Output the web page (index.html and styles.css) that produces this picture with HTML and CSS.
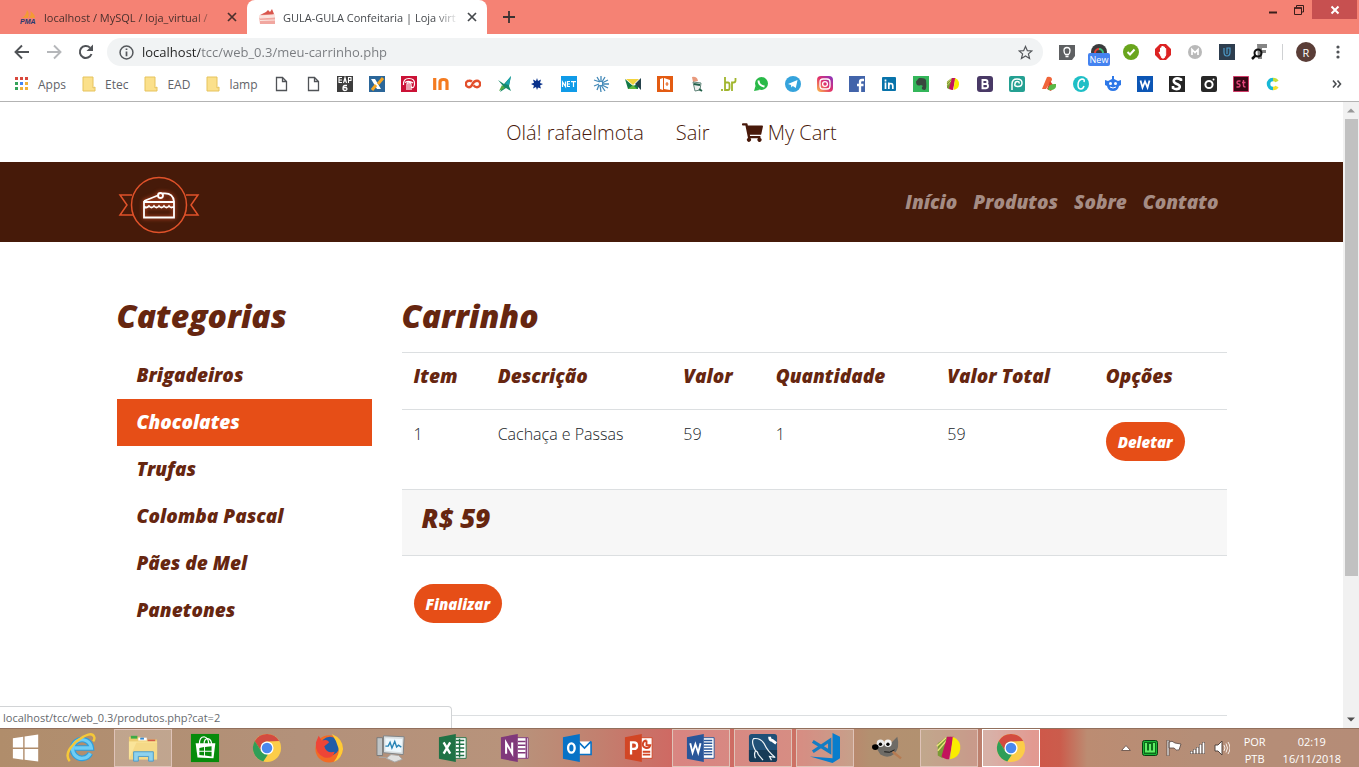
FILE: index.html
```html
<!DOCTYPE html>
<html lang="pt-BR">
<head>
<meta charset="utf-8">
<meta name="viewport" content="width=device-width, initial-scale=1">
<title>GULA-GULA Confeitaria | Loja virtual</title>
<link rel="stylesheet" href="styles.css">
</head>
<body>
<svg class="defs" aria-hidden="true">
  <symbol id="x" viewBox="0 0 10 10"><path d="M1 1l8 8M9 1L1 9" stroke="currentColor" stroke-width="1.7"/></symbol>
  <symbol id="folder" viewBox="0 0 16 16"><path d="M2 1h10v11l2-1v4H2z" fill="#fbe08b"/><path d="M2 1h10v11l2-1v4H2z" fill="none" stroke="#e6c35c"/></symbol>
  <symbol id="page" viewBox="0 0 16 16"><path d="M3.500 1.500h6l4 4v9h-10zM9.500 1.500v4h4" fill="#fff" stroke="#505357" stroke-width="1.300"/></symbol>
  <symbol id="chrome" viewBox="0 0 32 32"><circle cx="16" cy="16" r="15" fill="#fccd48"/><path d="M3 8.500l6.800 11.300L16 23l1 0-5 7.500A15 15 0 0 1 3 8.500z" fill="#2f9e58"/><path d="M3 8.500L10 20l6-4-1-6.500z" fill="#2f9e58"/><path d="M3 8.500A15 15 0 0 1 29 8.500L16 9a7 7 0 0 0-6 4l-.5 5z" fill="#d34b40"/><circle cx="16" cy="16" r="7" fill="#fff"/><circle cx="16" cy="16" r="5.600" fill="#4a88ee"/></symbol>
  <symbol id="ball" viewBox="0 0 32 32"><path d="M4 24L4 11 12 5 18 4 9 27z" fill="#7a9a35"/><path d="M3 14L13 5M4 19L16 5" stroke="#e8e37a" stroke-width="1.500"/><path d="M14 4h7l-5 24q-5 0-8-3z" fill="#c3145c"/><path d="M20 4q9 4 8 13t-11 11z" fill="#faed00"/></symbol>
  <symbol id="officedoc" viewBox="0 0 32 32"><path d="M16 5h14v22H16z" fill="#fff" stroke="currentColor"/><path d="M1 4.500L19 1v30L1 27.500z" fill="currentColor"/></symbol>
</svg>

<header class="browser">
  <div class="tabstrip">
    <div class="tab">
      <svg class="i16" viewBox="0 0 16 16"><path d="M2 9q4-2 5-8 3 3 1 8zM9 9q3-4 1-7 5 3 5 7z" fill="#f39a35"/><text x="0" y="15" class="pma">PMA</text></svg>
      <span class="tab-title">localhost / MySQL / loja_virtual /</span>
      <button class="tab-close" aria-label="Fechar guia"><svg viewBox="0 0 10 10"><use href="#x"/></svg></button>
    </div>
    <div class="tab active">
      <svg class="i16" viewBox="0 0 16 16"><path d="M0 7L10 3l6 3v9H1z" fill="#f1a7a0"/><path d="M0 7l16-1v2L1 9zM1 11.500l15-.5" stroke="#fbe5df" fill="#fbe5df"/><path d="M1 6L7 3l2-2 2 2 2-3 2 5z" fill="#d9564d"/></svg>
      <span class="tab-title">GULA-GULA Confeitaria | Loja virt</span>
      <button class="tab-close" aria-label="Fechar guia"><svg viewBox="0 0 10 10"><use href="#x"/></svg></button>
    </div>
    <button class="new-tab" aria-label="Nova guia"><svg viewBox="0 0 12 12"><path d="M6 0v12M0 6h12" stroke="#3b3232" stroke-width="1.800"/></svg></button>
    <div class="window-buttons">
      <button aria-label="Minimizar"><svg viewBox="0 0 12 12"><path d="M2 8.500h8" stroke="#3a1e1b" stroke-width="2"/></svg></button>
      <button aria-label="Restaurar"><svg viewBox="0 0 12 12"><path d="M1.500 4h7v6.500h-7zM3.500 3.500v-2h7v6.500h-2" fill="none" stroke="#3a1e1b"/><path d="M1 4h8" stroke="#3a1e1b" stroke-width="1.500"/></svg></button>
      <button class="win-close" aria-label="Fechar"><svg viewBox="0 0 12 12"><path d="M2.500 2.500l7 7M9.500 2.500l-7 7" stroke="#fff" stroke-width="2"/></svg></button>
    </div>
  </div>

  <div class="toolbar">
    <button aria-label="Voltar"><svg viewBox="0 0 16 16"><path d="M15 8H2M8 1.500L1.500 8 8 14.500" fill="none" stroke="#505357" stroke-width="1.900"/></svg></button>
    <button aria-label="Avançar"><svg viewBox="0 0 16 16"><path d="M1 8h13M8 1.500L14.500 8 8 14.500" fill="none" stroke="#b5b7ba" stroke-width="1.900"/></svg></button>
    <button aria-label="Recarregar"><svg viewBox="0 0 16 16"><path d="M13.500 10A6 6 0 1 1 12 3.600" fill="none" stroke="#505357" stroke-width="2"/><path d="M15 .5V7H8.500z" fill="#505357"/></svg></button>
    <div class="omnibox">
      <svg class="i14" viewBox="0 0 14 14"><circle cx="7" cy="7" r="6" fill="none" stroke="#55585c" stroke-width="1.400"/><path d="M7 6v4.500M7 3.200v1.500" stroke="#55585c" stroke-width="1.600"/></svg>
      <input class="url" type="text" aria-label="Endereço" value="localhost/tcc/web_0.3/meu-carrinho.php">
      <button aria-label="Favoritar"><svg viewBox="0 0 16 16"><path d="M8 1.500l2 4.500 4.800.4-3.700 3.100 1.200 4.800L8 11.700l-4.300 2.600 1.200-4.800L1.200 6.400 6 6z" fill="none" stroke="#55585c" stroke-width="1.300"/></svg></button>
    </div>
    <div class="extensions">
      <button aria-label="Dicas"><svg viewBox="0 0 16 16"><path d="M0 1h16v11l-3 4H0z" fill="#5e6062"/><path d="M6.500 10.500Q5 9 5 6.500a3 3 0 0 1 6 0Q11 9 9.500 10.500zM6.500 12.500h3" fill="none" stroke="#fff" stroke-width="1.300"/></svg></button>
      <button class="ext-new" aria-label="New"><svg viewBox="0 0 16 16"><circle cx="8" cy="8" r="8" fill="#3a3b3c"/><path d="M4 9a4 4 0 0 1 4-4" stroke="#e23e35" stroke-width="2" fill="none"/><path d="M8 5a4 4 0 0 1 4 4" stroke="#3cc37b" stroke-width="2" fill="none"/></svg><span class="badge">New</span></button>
      <button aria-label="Verificado"><svg viewBox="0 0 16 16"><circle cx="8" cy="8" r="8" fill="#69a51d"/><path d="M4.500 8l2.500 2.500 4.500-5" stroke="#fff" stroke-width="2" fill="none"/></svg></button>
      <button aria-label="Bloqueador"><svg viewBox="0 0 16 16"><path d="M5 0h6l5 5v6l-5 5H5l-5-5V5z" fill="#dc2323"/><path d="M4 8l1.500 1V4h1.300v4V2.500h1.300V8 3h1.300v5V4.500h1.300V11L9 14H7z" fill="#fff" stroke="#fff"/></svg></button>
      <button aria-label="M"><svg viewBox="0 0 16 16"><circle cx="8" cy="8" r="7" fill="#b9b9b9"/><path d="M5 11V5.500l3 3 3-3V11" fill="none" stroke="#fff" stroke-width="1.700"/></svg></button>
      <button aria-label="U"><svg viewBox="0 0 16 16"><path d="M0 0h16v16H0z" fill="#2d3d4e"/><path d="M5 4v4q0 4 3 4t3-4V4H8v6" fill="none" stroke="#4d9bc9" stroke-width="1.200"/></svg></button>
      <button aria-label="Fontes"><svg viewBox="0 0 16 16"><path d="M6 0h10v4h-5v2h4v3h-4v6H7z" fill="#858585"/><circle cx="7" cy="9" r="3.500" fill="none" stroke="#111" stroke-width="2"/><path d="M4.500 11.500L1 15" stroke="#111" stroke-width="2.500"/></svg></button>
    </div>
    <button class="avatar" aria-label="Perfil">R</button>
    <button class="menu" aria-label="Menu"><svg viewBox="0 0 16 16"><circle cx="8" cy="3" r="1.600"/><circle cx="8" cy="8" r="1.600"/><circle cx="8" cy="13" r="1.600"/></svg></button>
  </div>

  <nav class="bookmarks" aria-label="Favoritos">
    <a class="bm-text" href="#"><svg class="i16" viewBox="0 0 16 16"><path d="M1 2.500h3M6 2.500h3M11 2.500h3" stroke="#d9483c" stroke-width="3"/><path d="M1 7.500h3M1 12.500h3" stroke="#35a35a" stroke-width="3"/><path d="M6 7.500h3" stroke="#4285f4" stroke-width="3"/><path d="M11 7.500h3M6 12.500h3M11 12.500h3" stroke="#f0b13a" stroke-width="3"/></svg>Apps</a>
    <a class="bm-text" href="#"><svg class="i16"><use href="#folder"/></svg>Etec</a>
    <a class="bm-text" href="#"><svg class="i16"><use href="#folder"/></svg>EAD</a>
    <a class="bm-text" href="#"><svg class="i16"><use href="#folder"/></svg>lamp</a>
    <div class="bm-icons">
      <a href="#" aria-label="Página 1"><svg><use href="#page"/></svg></a>
      <a href="#" aria-label="Página 2"><svg><use href="#page"/></svg></a>
      <a href="#" aria-label="EAP 6"><svg viewBox="0 0 16 16"><path d="M0 0h16v16H0z" fill="#3d3d3d"/><path d="M5 1.500H2v5h3M2 4h3M6.500 7l1.500-5.500L9.500 7M7 5h2M11.500 7V1.500h2.500V4.500h-2.500" fill="none" stroke="#fff" stroke-width="1.100"/><path d="M10 9.500H8q-2 0-2 3 0 2 2 2t2-1.500-2-1.500-2 1" fill="none" stroke="#fff" stroke-width="1.300"/></svg></a>
      <a href="#" aria-label="X"><svg viewBox="0 0 16 16"><path d="M0 0h16v16H0z" fill="#2b6699"/><path d="M2 3h4l6 10h-4z" fill="#fff"/><path d="M14 2L9 8M7 9l-4 5" stroke="#f5a623" stroke-width="3"/></svg></a>
      <a href="#" aria-label="Bradesco"><svg viewBox="0 0 16 16"><path d="M0 0h16v16H0z" fill="#cb1236"/><path d="M2.500 9Q2 2.500 8 2.500T13.500 8 10 10.500M4 6.500Q8 4 12 7M6 14V8.500q0-2 2-2t2 2V14M8 7v7" stroke="#fff" stroke-width="1.200" fill="none"/></svg></a>
      <a href="#" aria-label="IN"><svg viewBox="0 0 16 16"><path d="M1.700 2v12M7 14V6q0-2.500 3.500-2.500T14 6v8" stroke="#f47b20" stroke-width="3.200" fill="none"/></svg></a>
      <a href="#" aria-label="CO"><svg viewBox="0 0 16 16"><path d="M7 5.500Q5.500 4.500 4 4.800a3.200 3.200 0 0 0 0 6.400Q6 11.200 7.500 8T12 4.800a3.200 3.200 0 0 1 0 6.400q-2 0-3.500-2" fill="none" stroke="#e24f2c" stroke-width="2.400"/></svg></a>
      <a href="#" aria-label="Pássaro"><svg viewBox="0 0 16 16"><path d="M1 4l6 4 7-8-2 10 2 5-5-3-6 4 3-6z" fill="#17896b"/><path d="M8 8l6-8-2 9z" fill="#1aa5b0"/><path d="M2 15l3-6 3 3z" fill="#53ac42"/></svg></a>
      <a href="#" aria-label="Estrela"><svg viewBox="0 0 16 16"><path d="M8 2l1 3 3-1.500-1 3.500 3 1-3 1.500 1 3-3-1L8 14l-1-3-3 1.500L5 9.500 2 8l3-1.200L4 3.500 7 5z" fill="#08318b"/></svg></a>
      <a href="#" aria-label="NET"><svg viewBox="0 0 16 16"><path d="M0 0h16v16H0z" fill="#109be8"/><path d="M1.500 11V6l3 4.500v-5M9 5.500H6.500v5H9M6.500 8H9M10 5.700h5M12.500 5.700V11" fill="none" stroke="#fff" stroke-width="1.200"/></svg></a>
      <a href="#" aria-label="Leque"><svg viewBox="0 0 16 16"><path d="M7 6L1 4M7 6L4 1M8 6V0M9 6l3-5M9 7l6-3M9 8h7M9 9l6 3M8 9l4 6M7 9l1 7M6 9l-2 5M6 8l-5 2" stroke="#4389b8" stroke-width="1.300"/></svg></a>
      <a href="#" aria-label="Carta"><svg viewBox="0 0 16 16"><path d="M0 3l3 10h10V8l-5 2z" fill="#127846"/><path d="M1 3h13L8 9z" fill="#f2d33d"/><path d="M10 8l6-6v12z" fill="#26424c"/><path d="M3 13l5-4 4 4z" fill="#60b83b"/></svg></a>
      <a href="#" aria-label="Livro"><svg viewBox="0 0 16 16"><path d="M0 0h16v16H0z" fill="#e35b12"/><path d="M3 3l3-1v12l-3-1zM7 2l6 2v10l-6-1z" fill="#fff"/><path d="M10 6v4M8.500 8h3" stroke="#e35b12"/></svg></a>
      <a href="#" aria-label="Mascote"><svg viewBox="0 0 16 16"><path d="M3 1q5-1 6 4l-5 1z" fill="#e8997c"/><path d="M4 6l8 1-1 7-5 1z" fill="#eee" stroke="#618579"/><path d="M5 8l6 1M10 13l3 2" stroke="#22604a" stroke-width="2"/></svg></a>
      <a href="#" aria-label="br"><svg viewBox="0 0 16 16"><path d="M4 1v13h3q1.500 0 1.500-2V8.500q0-2-1.500-2H4M11 15V6.500h1.500q2 0 2-2V2M1 13v2" stroke="#a0b52c" stroke-width="1.800" fill="none"/></svg></a>
      <a href="#" aria-label="WhatsApp"><svg viewBox="0 0 16 16"><circle cx="8.500" cy="7.500" r="6.500" fill="#28b947"/><path d="M1 15l1.500-5 4 4z" fill="#28b947"/><path d="M5.500 4.500q0 5 6 6" stroke="#fff" stroke-width="2" fill="none"/></svg></a>
      <a href="#" aria-label="Telegram"><svg viewBox="0 0 16 16"><circle cx="8" cy="8" r="8" fill="#35a3dc"/><path d="M3 8l9.500-4-1.700 8-3-2-1.500 1.500L6 9z" fill="#fff"/></svg></a>
      <a href="#" aria-label="Instagram"><svg viewBox="0 0 16 16"><defs><linearGradient id="ig" x1="0" y1="1" x2="1" y2="0"><stop offset="0" stop-color="#fdc34c"/><stop offset=".5" stop-color="#e1306c"/><stop offset="1" stop-color="#8133c5"/></linearGradient></defs><rect width="16" height="16" rx="4" fill="url(#ig)"/><rect x="3" y="3" width="10" height="10" rx="3" fill="none" stroke="#fff" stroke-width="1.300"/><circle cx="8" cy="8" r="2.400" fill="none" stroke="#fff" stroke-width="1.300"/></svg></a>
      <a href="#" aria-label="Facebook"><svg viewBox="0 0 16 16"><path d="M0 0h16v16H0z" fill="#4264aa"/><path d="M11 16V6q0-2 2-2h2M8 9h6.500" stroke="#fff" stroke-width="2.300" fill="none"/></svg></a>
      <a href="#" aria-label="LinkedIn"><svg viewBox="0 0 16 16"><rect x="1" y="1" width="14" height="14" rx="1" fill="#0873aa"/><path d="M4.500 6.500V13M4.500 3.500v2M7.800 13V6.500M7.800 10q0-2.500 2-2.500T11.800 10v3" stroke="#fff" stroke-width="1.700" fill="none"/></svg></a>
      <a href="#" aria-label="Evernote"><svg viewBox="0 0 16 16"><path d="M0 0h16v16H0z" fill="#34b65a"/><path d="M3 5.500L6 2q6-.5 7 2 1 9-1 10-4 0-3-3l1-1-2-1q-5 2-5-3.500z" fill="#39473e"/></svg></a>
      <a href="#" aria-label="Bola"><svg><use href="#ball"/></svg></a>
      <a href="#" aria-label="Bootstrap"><svg viewBox="0 0 16 16"><rect width="16" height="16" rx="3" fill="#493966"/><path d="M5.500 4h3q2 0 2 2t-2 2h-3 3.500q2 0 2 2t-2 2.200H5.500z" fill="none" stroke="#fff" stroke-width="1.900"/></svg></a>
      <a href="#" aria-label="P"><svg viewBox="0 0 16 16"><rect width="16" height="16" rx="2" fill="#24a092"/><path d="M3 14V8q0-5 5-5t5 4q0 3.500-4 3.500T6 8q0-2.500 2.300-2.500T10 7.500" stroke="#fff" stroke-width="1.500" fill="none"/></svg></a>
      <a href="#" aria-label="Folhas"><svg viewBox="0 0 16 16"><path d="M1 13L6 1q5-1 5 3L5 13z" fill="#f0653a"/><path d="M6 13L9 5l4 5-3 5z" fill="#db3e24"/><path d="M7 14q0-7 8-6 1 7-8 6z" fill="#59b947"/></svg></a>
      <a href="#" aria-label="Canva"><svg viewBox="0 0 16 16"><circle cx="8" cy="8" r="8" fill="#1ebfc6"/><path d="M11 6q1-3-2-3-4 1-4 6 0 4 3 4 2 0 3-3" stroke="#fff" stroke-width="1.500" fill="none"/></svg></a>
      <a href="#" aria-label="Robô"><svg viewBox="0 0 16 16"><path d="M7 0h2v3l4 2 3-1v5l-2 1q-1 5-6 5t-6-5L0 9V4l3 1 4-2z" fill="#2d78e8"/><path d="M5 11q3 2 6 0" stroke="#fff" fill="none"/><circle cx="5.500" cy="7.500" r="1.500" fill="#fff"/><circle cx="10.500" cy="7.500" r="1.500" fill="#fff"/></svg></a>
      <a href="#" aria-label="W"><svg viewBox="0 0 16 16"><path d="M0 0h16v16H0z" fill="#0c56b5"/><path d="M3.500 4.500l2 7L8 5.500l2.500 6 2-7" stroke="#fff" stroke-width="1.800" fill="none"/></svg></a>
      <a href="#" aria-label="S"><svg viewBox="0 0 16 16"><path d="M0 0h16v16H0z" fill="#252525"/><path d="M12 5V3.500Q9 2 7 2.500 4 3.500 5 6q1 1.500 4 2.500 3 1.500 1 4-3 1.500-6-.5V10" stroke="#fff" stroke-width="2.600" fill="none"/></svg></a>
      <a href="#" aria-label="Câmera"><svg viewBox="0 0 16 16"><rect width="16" height="16" rx="2" fill="#272727"/><circle cx="8" cy="8.500" r="3.600" fill="none" stroke="#fff" stroke-width="2"/><circle cx="12.500" cy="3.500" r="1" fill="#fff"/></svg></a>
      <a href="#" aria-label="Stock"><svg viewBox="0 0 16 16"><path d="M.5.500h15v15H.5z" fill="#3a0715" stroke="#d03b68"/><path d="M7.500 5H5.500q-1.500 0-1.500 1.500T5.500 8 7 9.500 5.500 11H3.500M10.500 4v5.500q0 1.500 2 1.500M9 6.500h3.500" stroke="#e2467a" stroke-width="1.400" fill="none"/></svg></a>
      <a href="#" aria-label="C"><svg viewBox="0 0 16 16"><path d="M8 3.500A4.500 4.500 0 0 0 8 12.500" fill="none" stroke="#17b8d6" stroke-width="3.500"/><path d="M8 3.500q3 0 4 2" fill="none" stroke="#c4dd3c" stroke-width="3.500"/><path d="M8 12.500q3 0 4-2" fill="none" stroke="#f3e12f" stroke-width="3.500"/></svg></a>
    </div>
    <button class="more" aria-label="Mais favoritos"><svg viewBox="0 0 10 10"><path d="M1 1.500L4 5 1 8.500M5.500 1.500L8.500 5l-3 3.500" fill="none" stroke="#4b4e52" stroke-width="1.600"/></svg></button>
  </nav>
</header>

<div class="viewport">
  <div class="site">
    <nav class="account" aria-label="Conta">
      <a href="#">Olá! rafaelmota</a>
      <a href="#">Sair</a>
      <a href="#"><svg class="cart" viewBox="0 0 576 512"><path fill="currentColor" d="M528 301l47-208c4-15-8-29-23-29H160l-9-45C149 8 139 0 128 0H24C11 0 0 11 0 24v16c0 13 11 24 24 24h70l70 343a56 56 0 1 0 67 9h210a56 56 0 1 0 64-10l5-25c4-15-8-29-23-29H221l-7-32h294c11 0 21-8 20-19z"/></svg> My Cart</a>
    </nav>
    <div class="navbar">
      <div class="container navbar-inner">
        <a class="logo" href="#" aria-label="GULA-GULA Confeitaria"><svg viewBox="0 0 84 60"><g fill="none" stroke="#e0522a" stroke-width="1.500"><circle cx="42" cy="30" r="27.500"/><path d="M15 20H3l7 10-7 10h14M69 20h12l-7 10 7 10H67"/></g><g class="glow" fill="none" stroke="#fff" stroke-width="1.800"><path d="M27 27v15.500h30V27zM27 26l15-6M46 18.500q10-1 11 8M27 31q2 3 5 0 2.500 3 5 0 2.500 3 5 0 2.500 3 5 0 2.500 3 5 0 2.500 3 5 0"/><circle cx="43.500" cy="20.500" r="2.500"/></g></svg></a>
        <nav class="links" aria-label="Principal">
          <a href="#">Início</a><a href="#">Produtos</a><a href="#">Sobre</a><a href="#">Contato</a>
        </nav>
      </div>
    </div>
    <div class="container columns">
      <aside class="sidebar">
        <h2>Categorias</h2>
        <ul>
          <li><a href="#">Brigadeiros</a></li>
          <li><a class="selected" href="#">Chocolates</a></li>
          <li><a href="#">Trufas</a></li>
          <li><a href="#">Colomba Pascal</a></li>
          <li><a href="#">Pães de Mel</a></li>
          <li><a href="#">Panetones</a></li>
        </ul>
      </aside>
      <main class="content">
        <h2>Carrinho</h2>
        <table class="cart-table">
          <thead><tr><th class="c-item">Item</th><th class="c-desc">Descrição</th><th class="c-value">Valor</th><th class="c-qty">Quantidade</th><th class="c-total">Valor Total</th><th>Opções</th></tr></thead>
          <tbody><tr><td>1</td><td>Cachaça e Passas</td><td>59</td><td>1</td><td>59</td><td><button class="pill">Deletar</button></td></tr></tbody>
          <tfoot><tr><td colspan="6">R$ 59</td></tr></tfoot>
        </table>
        <button class="pill finish">Finalizar</button>
      </main>
    </div>
    <div class="container"><hr></div>
  </div>
  <div class="scrollbar" aria-hidden="true">
    <svg viewBox="0 0 16 16"><path d="M4 10l4-4 4 4z" fill="#979797"/></svg>
    <div class="thumb"></div>
    <svg class="down" viewBox="0 0 16 16"><path d="M4 6l4 4 4-4z" fill="#505050"/></svg>
  </div>
  <div class="status">localhost/tcc/web_0.3/produtos.php?cat=2</div>
</div>

<footer class="taskbar">
  <button class="start" aria-label="Iniciar"><svg viewBox="0 0 32 32"><path d="M2 5.500l11-1.600v11.600H2zM14.500 3.700L29 1.700v13.800H14.500zM2 17h11v11.400L2 26.800zM14.500 17H29v13.500l-14.500-2z" fill="#fff"/></svg></button>
  <div class="apps">
    <button aria-label="Internet Explorer"><svg viewBox="0 0 32 32"><path d="M26 21.500a10 10 0 1 1 1-5.500H9" fill="none" stroke="#2f9fdc" stroke-width="6"/><path d="M26 21.500a10 10 0 1 1 1-5.500H9" fill="none" stroke="#6fcdf5" stroke-width="3.500"/><path d="M4 30Q-3 22 11 9 27-3 30 4q1 2-1 5" fill="none" stroke="#f5c838" stroke-width="2.600"/></svg></button>
    <button class="open" aria-label="Explorador de Arquivos"><svg viewBox="0 0 32 32"><path d="M1 4h12l2 3h16v21H1z" fill="#edcc72"/><path d="M3 3h7v3H3z" fill="#3cab45"/><path d="M11 5h9v3h-9z" fill="#fff"/><path d="M13 5h4v2h-4z" fill="#3489d0"/><path d="M21 7h8v2h-8z" fill="#d55e48"/><path d="M1 9h30v19H1z" fill="#fae499"/><path d="M1 28L9 10h22v18z" fill="#f5d987"/><path d="M6 30V20h21v10h-5v-5H11v5z" fill="#8dd2ee" stroke="#4b9ac8"/></svg></button>
    <button aria-label="Loja"><svg viewBox="0 0 32 32"><path d="M1 1h30v30H1z" fill="#078b0b"/><path d="M6 11h21l-2 16-17-1z" fill="#fff"/><path d="M10 12q0-8 5-8 5 1 5 8M15 12q0-6 4-6 4 1 4 6" stroke="#fff" fill="none" stroke-width="1.300"/><path d="M10 16l5-1v4h-5zM16 15l7-1v5h-7zM10 20h5v4l-5-.5zM16 20h7v5l-7-1z" fill="#078b0b"/></svg></button>
    <button aria-label="Chrome"><svg><use href="#chrome"/></svg></button>
    <button aria-label="Firefox"><svg viewBox="0 0 32 32"><circle cx="16" cy="17" r="14.500" fill="#f26b25"/><circle cx="17" cy="14" r="10" fill="#215ca8"/><path d="M2 10l3-7 3 5q7-2 8 2l-5 4q2 8 11 6-2 8-11 6Q1 22 2 10z" fill="#ee4537"/><path d="M19 1q12 5 12 16-1 10-10 14 7-9 5-15-2-8-7-15z" fill="#fecb36"/></svg></button>
    <button aria-label="Monitor"><svg viewBox="0 0 32 32"><path d="M1 5h6v19H1z" fill="#bfc4c6" stroke="#777"/><path d="M8 3l22 1-1 19-21-2z" fill="#d9dee0" stroke="#7c8184"/><path d="M10 5.500l18 1-1 14-17-1.500z" fill="#eef8fd"/><path d="M10 14h3l2-4 2 6 3-7 2 6 2-2 3 2" fill="none" stroke="#2583b5" stroke-width="1.500"/><path d="M16 23l8 1 4 4-8 3-9-4zM3 26h8" fill="#e0e0df" stroke="#aaa"/></svg></button>
    <button class="excel" aria-label="Excel"><svg viewBox="0 0 32 32"><use href="#officedoc"/><path d="M19 8h9M19 12h9M19 16h9M19 20h9M19 24h9M23 6v20" stroke="currentColor" stroke-width="1.500"/><path d="M6 10l7 12M13 10L6 22" stroke="#fff" stroke-width="2.500"/></svg></button>
    <button class="onenote" aria-label="OneNote"><svg viewBox="0 0 32 32"><use href="#officedoc"/><path d="M19 9h8M19 13h8M19 17h8M19 21h8M28 5v22" stroke="currentColor" stroke-width="1.500"/><path d="M6.500 22V10.500l6.500 11V10" stroke="#fff" stroke-width="2.200" fill="none"/></svg></button>
    <button class="outlook" aria-label="Outlook"><svg viewBox="0 0 32 32"><path d="M18 9h13v14H18z" fill="#fff"/><path d="M18 10l6 6 7-7M18 23h13V9" fill="none" stroke="currentColor" stroke-width="1.700"/><path d="M1 4.500L19 1v30L1 27.500z" fill="currentColor"/><ellipse cx="10" cy="16" rx="3.500" ry="5" fill="none" stroke="#fff" stroke-width="2.500"/></svg></button>
    <button class="powerpoint" aria-label="PowerPoint"><svg viewBox="0 0 32 32"><use href="#officedoc"/><path d="M20 20h8M20 23h8M24 8v5h4a4 4 0 1 1-4-5" stroke="currentColor" stroke-width="2" fill="none"/><path d="M7.500 23V10h3q3.500 0 3.500 3.500T10.500 17h-3" stroke="#fff" stroke-width="2.400" fill="none"/></svg></button>
    <button class="word open" aria-label="Word"><svg viewBox="0 0 32 32"><use href="#officedoc"/><path d="M19 8h9M19 11h9M19 14h9M19 17h9M19 20h9M19 23h9" stroke="currentColor" stroke-width="1.500"/><path d="M4.500 11l2.500 10 3-9 3 9 2.500-10" stroke="#fff" stroke-width="2" fill="none"/></svg></button>
    <button class="open" aria-label="MySQL Workbench"><svg viewBox="0 0 32 32"><rect x="1" y="1" width="30" height="30" rx="3" fill="#205077"/><path d="M1 18h30v10q0 3-3 3H4q-3 0-3-3z" fill="#173b57"/><path d="M8 27q-2-4 0-8-5-10-2-13 7-1 11 5 4 9 12 15l-6-1 2 4M8 19q2 0 3 4l5 6" fill="none" stroke="#eef4f7" stroke-width="1.300"/><path d="M23 4q0 4 3 4l4 3" stroke="#fff" stroke-width="3" fill="none"/></svg></button>
    <button class="open" aria-label="Visual Studio Code"><svg viewBox="0 0 32 32"><path d="M3 20L21 8v12L3 9" fill="none" stroke="#147dc4" stroke-width="3.500"/><path d="M24 0l8 4v23l-8 5L0 25l24 2z" fill="#087dcc"/></svg></button>
    <button aria-label="GIMP"><svg viewBox="0 0 32 32"><path d="M4 15q4-7 8-4l6 2 9-9q3 12-3 18-7 6-15 1z" fill="#6e6b66"/><circle cx="9" cy="11" r="4" fill="#e9e9e9"/><circle cx="17" cy="11" r="4" fill="#f2f2f2"/><circle cx="9" cy="12" r="1.800"/><circle cx="17" cy="12" r="1.800"/><ellipse cx="3.500" cy="15" rx="3.500" ry="3"/><path d="M13 20q6 2 11-2" stroke="#111" fill="none"/><path d="M22 20l9 7" stroke="#b67b52" stroke-width="2.500"/></svg></button>
    <button class="open" aria-label="Gula"><svg><use href="#ball"/></svg></button>
    <button class="open current" aria-label="Google Chrome"><svg><use href="#chrome"/></svg></button>
  </div>
  <div class="tray">
    <svg viewBox="0 0 16 16"><path d="M3.500 10.500l4.500-5 4.500 5z" fill="#fff" stroke="#765f55"/></svg>
    <svg viewBox="0 0 16 16"><rect x=".5" y=".5" width="15" height="15" rx="2" fill="#18b536" stroke="#063f10"/><rect x="2" y="2" width="12" height="12" fill="#0c6b1b"/><path d="M4 3v8.500h8V3M8 4v8" stroke="#5fed65" stroke-width="2" fill="none"/></svg>
    <svg viewBox="0 0 16 16"><path d="M1 0h2v16H1zM3 2q3-2 6 1l6 1-2 6q-3 1-5-2H3z" fill="#fff" stroke="#53443f" stroke-width=".8"/></svg>
    <svg viewBox="0 0 16 16"><path d="M1.500 14v-3M4.500 14V9M7.500 14V7M10.500 14V4M13.500 14V2" stroke="#5b4a43" stroke-width="3"/><path d="M1.500 13.500v-2M4.500 13.500v-4M7.500 13.500v-6M10.500 13.500v-9M13.500 13.500v-11" stroke="#fff" stroke-width="1.800"/></svg>
    <svg viewBox="0 0 16 16"><path d="M1 5h3l4-4v14l-4-4H1z" fill="#fff" stroke="#53443f"/><path d="M10 5q2 3 0 6M12 3.500q3 4.500 0 9M14 2q4 6 0 12" stroke="#f8efeb" fill="none"/></svg>
  </div>
  <div class="lang"><span>POR</span><span>PTB</span></div>
  <div class="clock"><span>02:19</span><span>16/11/2018</span></div>
</footer>
</body>
</html>
```

FILE: styles.css
```css
* { box-sizing: border-box; }
body {
  margin: 0;
  height: 100vh;
  display: flex;
  flex-direction: column;
  overflow: hidden;
  background: #fff;
  font: 12px "Open Sans", "Noto Sans", sans-serif;
  color: #212529;
}
a { color: inherit; text-decoration: none; }
button { border: 0; padding: 0; background: none; font: inherit; color: inherit; }
svg { display: block; }
h2, ul { margin: 0; padding: 0; }
.defs { position: absolute; width: 0; height: 0; }
.i16 { width: 16px; height: 16px; flex: none; }
.i14 { width: 14px; height: 14px; flex: none; }
.pma { font: italic 900 7px "Liberation Sans", sans-serif; fill: #29386f; }

/* Browser frame */
.browser { flex: none; border-bottom: 1px solid #b3b3b3; }
.tabstrip { display: flex; height: 34px; background: #f58274; }
.tab { display: flex; align-items: center; gap: 8px; width: 247px; padding: 0 10px 0 20px; color: #4a302d; }
.tab.active { width: 240px; padding-left: 12px; background: #fff; border-radius: 8px 8px 0 0; color: #45484c; }
.tab-title {
  flex: 1;
  font-size: 11px;
  white-space: nowrap;
  -webkit-mask-image: linear-gradient(to right, #000 86%, transparent);
  mask-image: linear-gradient(to right, #000 86%, transparent);
}
.tab-close svg { width: 10px; height: 10px; }
.new-tab { padding: 0 16px; }
.new-tab svg { width: 12px; height: 12px; }
.window-buttons { display: flex; align-items: flex-start; margin-left: auto; padding-right: 2px; }
.window-buttons button { display: grid; place-items: center; width: 26px; height: 19px; }
.window-buttons svg { width: 12px; height: 12px; }
.window-buttons .win-close { width: 45px; background: #c75050; }

.toolbar { display: flex; align-items: center; height: 36px; padding: 0 13px 0 14px; }
.toolbar > button svg { width: 16px; height: 16px; margin-right: 16px; }
.omnibox { flex: 1; display: flex; align-items: center; gap: 8px; height: 28px; margin-left: -3px; padding: 0 10px 0 12px; border-radius: 14px; background: #f1f3f4; }
.omnibox svg { width: 15px; height: 15px; }
.url {
  flex: 1;
  min-width: 0;
  border: 0;
  padding: 0;
  outline: 0;
  font: 13px "Open Sans", sans-serif;
  color: transparent;
  background: linear-gradient(to right, #222 58px, #777a7e 58px);
  -webkit-background-clip: text;
  background-clip: text;
}
.extensions { display: flex; gap: 16px; padding: 0 15px 0 16px; margin-right: 13px; border-right: 1px solid #cfd1d3; }
.extensions svg { width: 16px; height: 16px; }
.ext-new { position: relative; }
.badge { position: absolute; left: -3px; top: 9px; width: 22px; height: 13px; border-radius: 2px; background: #4482f0; color: #fff; font-size: 9px; line-height: 13px; text-align: center; }
.toolbar .avatar { width: 20px; height: 20px; border-radius: 50%; background: #5a3d37; color: #fff; font-size: 11px; }
.toolbar .menu { margin-left: 14px; }
.toolbar .menu svg { margin: 0; fill: #505357; }

.bookmarks { display: flex; align-items: center; height: 31px; padding: 0 17px 3px 14px; color: #5f6368; }
.bm-text { display: flex; align-items: center; gap: 8px; margin-right: 15px; }
.bm-icons { display: flex; gap: 16px; }
.bm-icons svg { width: 16px; height: 16px; }
.more { margin-left: auto; }
.more svg { width: 10px; height: 10px; }

/* Page area */
.viewport { position: relative; flex: 1; min-height: 0; display: flex; }
.site { flex: 1; min-width: 0; overflow: hidden; }
.scrollbar { display: flex; flex-direction: column; width: 16px; background: #f1f1f1; }
.scrollbar svg { width: 16px; height: 17px; }
.scrollbar .down { margin-top: auto; }
.thumb { width: 13px; height: 73%; margin-left: 2px; background: #c1c1c1; }
.container { width: 100%; max-width: 1140px; margin: 0 auto; padding: 0 15px; }

.account { display: flex; justify-content: center; align-items: center; gap: 32px; height: 60px; color: #48190a; font-size: 20px; font-weight: 300; }
.account a { display: flex; align-items: center; gap: 5px; }
.cart { width: 21px; height: 19px; }
.navbar { background: #461a09; }
.navbar-inner { display: flex; justify-content: space-between; align-items: center; height: 80px; }
.logo svg { width: 84px; height: 60px; margin-top: 5px; }
.glow { filter: drop-shadow(0 0 2px #e0522a); }
.links { display: flex; }
.links a { padding: 0 8px; color: #a58c84; font: italic 800 19px/30px "Open Sans", sans-serif; }

.columns { display: flex; gap: 30px; padding-top: 51px; color: #662610; }
.sidebar { flex: none; width: 255px; }
.content { flex: 1; min-width: 0; }
h2 { font: italic 800 32px/46px "Open Sans", sans-serif; }
.sidebar ul { list-style: none; margin-top: 13px; }
.sidebar li a { display: block; padding: 0 20px; font: italic 800 19px/47px "Open Sans", sans-serif; }
.sidebar .selected { background: #e64e17; color: #fff; }
.cart-table { width: 100%; margin-top: 13px; border-collapse: collapse; table-layout: fixed; text-align: left; }
.cart-table tr { border-top: 1px solid #dcdfe1; }
.cart-table th { height: 57px; padding: 8px 12px; vertical-align: top; font: italic 800 19px/30px "Open Sans", sans-serif; }
.cart-table td { height: 80px; padding: 12px; vertical-align: top; color: #212529; font-size: 16px; line-height: 24px; font-weight: 300; }
.cart-table tfoot tr { border-bottom: 1px solid #dcdfe1; background: #f7f7f7; }
.cart-table tfoot td { height: 66px; padding: 9px 20px; color: #662610; font: italic 800 26px/38px "Open Sans", sans-serif; }
.c-item { width: 10.2%; }
.c-desc { width: 22.5%; }
.c-value { width: 11.2%; }
.c-qty { width: 20.8%; }
.c-total { width: 19.2%; }
.pill { display: block; height: 39px; padding: 0 12px; border-radius: 20px; background: #e64e17; color: #fff; font: italic 800 15px "Open Sans", sans-serif; }
.finish { margin: 28px 12px 0; }
hr { margin: 81px 0 0; border: 0; border-top: 1px solid #dcdfe1; }
.status { position: absolute; left: 0; bottom: 0; width: 452px; height: 22px; padding-left: 3px; border: 1px solid #d2d4d6; border-width: 1px 1px 0 0; border-radius: 0 4px 0 0; background: #fff; color: #66696d; font-size: 11px; line-height: 21px; }

/* Taskbar */
.taskbar {
  flex: none;
  display: flex;
  height: 39px;
  border-top: 1px solid #92705d;
  color: #fff;
  background: linear-gradient(to right, #b08d6b 0, #b3917a 22%, #b8937b 38%, #c2806f 44%, #d06762 50%, #cc7265 59%, #b39070 64%, #b29170 68%, #bf7c6d 73%, #cf5749 76%, #cb5c4c 78%, #bc8c72 80%, #b58e77 88%, #b58c77 100%);
}
.start { display: grid; place-items: center; width: 52px; }
.taskbar button svg { width: 30px; height: 30px; }
.apps { display: flex; gap: 4px; }
.apps button { display: grid; place-items: center; width: 58px; border: 1px solid transparent; }
.apps .open { border-color: #dfc3b8; background: #ffffff33; }
.apps .current { border-color: #fff; background: #ffffff66; }
.apps .excel { color: #207245; }
.apps .onenote { color: #80397b; }
.apps .outlook { color: #0872c6; }
.apps .powerpoint { color: #d24625; }
.apps .word { color: #2a5699; }
.tray { display: flex; align-items: center; gap: 8px; margin-left: auto; }
.tray svg { width: 16px; height: 16px; }
.lang, .clock { display: flex; flex-direction: column; align-items: center; padding-top: 4px; font-size: 11px; line-height: 17px; }
.lang { margin-left: 14px; }
.clock { margin: 0 18px 0 17px; }
```
